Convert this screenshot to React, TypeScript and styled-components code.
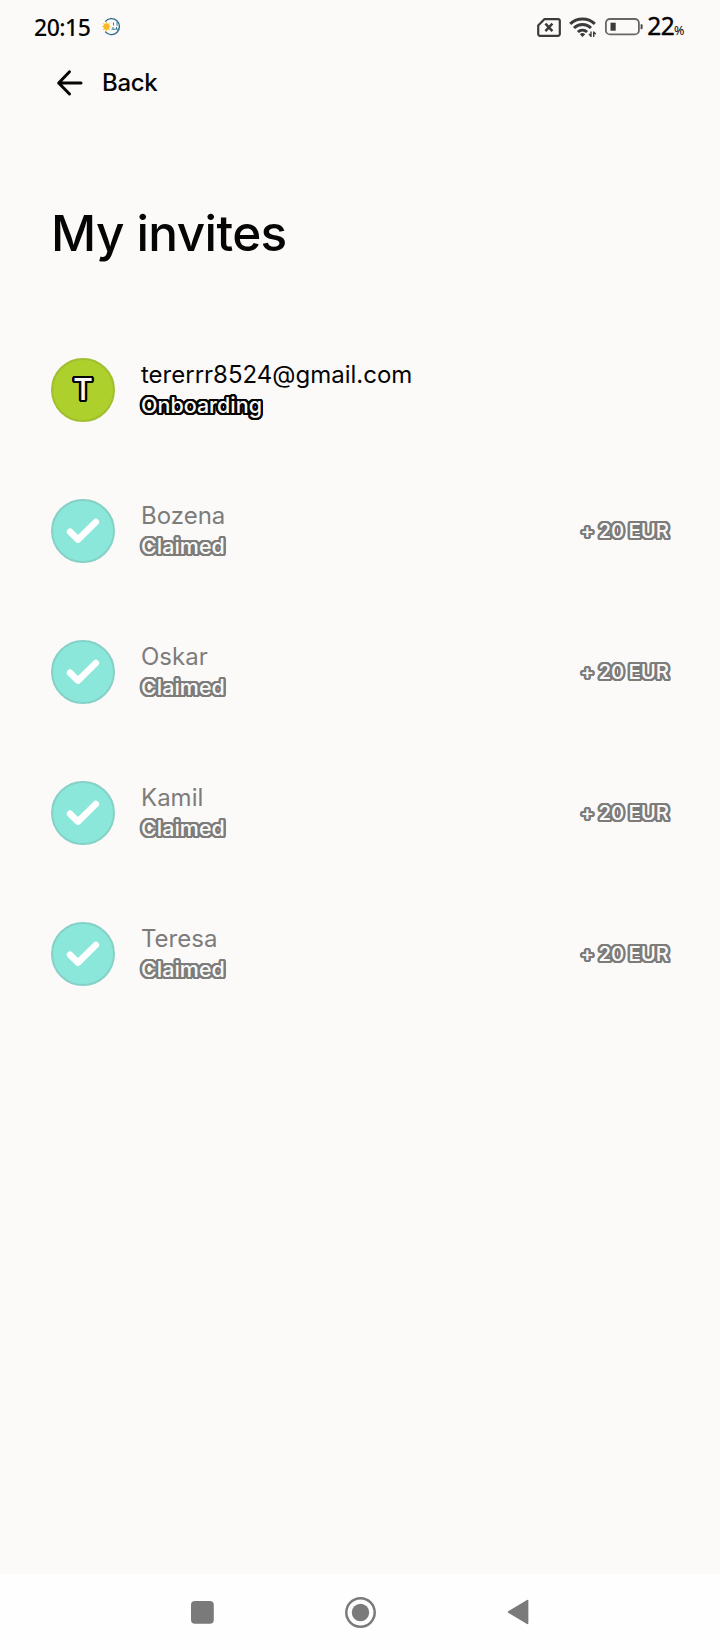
import React from 'react';
import styled, { createGlobalStyle } from 'styled-components';

const Global = createGlobalStyle`
  * { box-sizing: border-box; }
  body { margin: 0; background: #fcfaf9; font-family: Inter, "Liberation Sans", sans-serif; color: #050505; }
`;

const Screen = styled.div`
  width: 720px;
  height: 1650px;
  display: flex;
  flex-direction: column;
  background: #fcfaf9;
  overflow: hidden;
`;

const StatusBar = styled.header`
  height: 54px;
  padding: 0 36px 0 34px;
  display: flex;
  align-items: center;
  justify-content: space-between;
`;

const StatusGroup = styled.div`
  display: flex;
  align-items: center;
`;

const Clock = styled.span`
  font: 500 23px/28px "Noto Sans", sans-serif;
  letter-spacing: -0.5px;
  margin: -1px 12px 0 0;
`;

const BatteryLevel = styled.span`
  display: flex;
  align-items: baseline;
  margin: 2px 0 0 4px;
  font: 400 24.5px/28px "Noto Sans", sans-serif;
  -webkit-text-stroke: 0.4px #050505;
  letter-spacing: -0.6px;
`;

const Percent = styled.small`
  font-size: 12.5px;
  -webkit-text-stroke: 0;
  letter-spacing: -0.5px;
`;

const StatusIcon = styled.svg<{ $gap?: number }>`
  display: block;
  flex: none;
  margin-right: ${(p) => p.$gap ?? 0}px;
`;

const BackLink = styled.div`
  height: 56px;
  padding-left: 56px;
  display: flex;
  align-items: center;
  font-size: 24px;
  font-weight: 450;
  letter-spacing: -0.3px;
  svg { margin: 1px 18px 0 0; }
`;

const Title = styled.h1`
  margin: 91px 0 0 51px;
  font-size: 49.5px;
  line-height: 64px;
  font-weight: 450;
  letter-spacing: -0.6px;
`;

const InviteList = styled.ul`
  list-style: none;
  margin: 93px 0 0;
  padding: 0 51px;
  flex: 1;
`;

const InviteRow = styled.li<{ $claimed: boolean }>`
  height: 64px;
  margin-bottom: 77px;
  display: flex;
  align-items: center;
  color: ${(p) => (p.$claimed ? '#7c7c7b' : '#050505')};
`;

const Avatar = styled.div<{ $claimed: boolean }>`
  width: 64px;
  height: 64px;
  border-radius: 50%;
  background: ${(p) => (p.$claimed ? '#8be7da' : '#aed02c')};
  border: 2px solid ${(p) => (p.$claimed ? '#86d1c6' : '#a0bf2e')};
  display: flex;
  align-items: center;
  justify-content: center;
`;

// A ring of hard shadows gives the letters an outline with rounded corners.
const ring = (radius: number, color: string) =>
  Array.from({ length: 24 }, (_, i) => {
    const angle = (i * Math.PI) / 12;
    return `${(radius * Math.cos(angle)).toFixed(2)}px ${(radius * Math.sin(angle)).toFixed(2)}px 0 ${color}`;
  }).join(', ');

const Outlined = styled.span<{ $claimed: boolean }>`
  color: #fcfaf9;
  font-weight: 500;
  text-shadow: ${(p) => ring(2.2, p.$claimed ? '#7c7c7b' : '#050505')};
`;

const Initial = styled(Outlined)`
  font-size: 30px;
  line-height: 36px;
  margin-top: -2px;
`;

const Details = styled.div`
  margin: -2px 0 0 26px;
  flex: 1;
  display: flex;
  flex-direction: column;
`;

const Name = styled.span`
  font-size: 24px;
  line-height: 32px;
`;

const Status = styled(Outlined)`
  margin-top: -1px;
  font-size: 21.5px;
  line-height: 30px;
`;

const Amount = styled(Outlined)`
  font-size: 20.5px;
  line-height: 30px;
  letter-spacing: -0.1px;
  word-spacing: -1px;
`;

const NavBar = styled.nav`
  height: 76px;
  padding: 0 191px;
  display: flex;
  align-items: center;
  justify-content: space-between;
  background: #fefefe;
  svg { display: block; }
`;

interface Invite {
  name: string;
  status: string;
  reward?: string;
}

const invites: Invite[] = [
  { name: 'tererrr8524@gmail.com', status: 'Onboarding' },
  { name: 'Bozena', status: 'Claimed', reward: '+ 20 EUR' },
  { name: 'Oskar', status: 'Claimed', reward: '+ 20 EUR' },
  { name: 'Kamil', status: 'Claimed', reward: '+ 20 EUR' },
  { name: 'Teresa', status: 'Claimed', reward: '+ 20 EUR' },
];

const WeatherIcon = () => (
  <StatusIcon width="19" height="20" viewBox="0 0 19 20" fill="none">
    <path d="M3.2 4.6A8 8 0 1 1 3.2 14.6" stroke="#286b88" strokeWidth="1.4" />
    <path d="M4.5 4.5l1 2.4 2.4-1-1 2.4 2.1 1.3-2.1 1.2 1 2.5-2.4-1-1 2.4-1-2.4-2.5 1 1-2.5L0 9.6l2-1.3-1-2.4 2.5 1z" fill="#f8b92c" />
    <path d="M11.5 5.5v3M15 5v3.8M9.5 12.2h7M11 10v2M14.5 10v2.2" stroke="#3c8299" strokeWidth="1" />
  </StatusIcon>
);

const NoSimIcon = () => (
  <StatusIcon $gap={8} width="24" height="19" viewBox="0 0 24 19" fill="none" stroke="#3b3b3b">
    <path d="M7.3 1.2H21a1.8 1.8 0 0 1 1.8 1.8v13a1.8 1.8 0 0 1-1.8 1.8H3A1.8 1.8 0 0 1 1.2 16V7.6z" strokeWidth="2.2" strokeLinejoin="round" />
    <path d="M8.4 5.7l7 7.4M15.4 5.7l-7 7.4" strokeWidth="2.5" />
  </StatusIcon>
);

const WifiIcon = () => (
  <StatusIcon $gap={8} width="28" height="21" viewBox="0 0 28 21" fill="none" stroke="#3b3b3b">
    <path d="M1.2 6.8a18 18 0 0 1 24.6 0M5 11a12.3 12.3 0 0 1 17 0M8.9 15a6.8 6.8 0 0 1 9.2 0" strokeWidth="3" />
    <path d="M10.8 17.2a4 4 0 0 1 5.4 0l-2.7 2.9z" fill="#3b3b3b" stroke="none" />
    <path d="M22 14.5V20M20 17L22 19.2M24.7 20V14.5M26.7 17.2L24.7 15" strokeWidth="1.4" />
  </StatusIcon>
);

const BatteryIcon = () => (
  <StatusIcon width="38" height="18" viewBox="0 0 38 18">
    <rect x="0.9" y="1" width="33" height="15.4" rx="4" fill="none" stroke="#666" strokeWidth="1.8" />
    <rect x="5.5" y="4.7" width="5.2" height="8" fill="#3b3b3b" />
    <path d="M35.6 6.3h1a1 1 0 0 1 1 1v3a1 1 0 0 1-1 1h-1z" fill="#4b4b4b" />
  </StatusIcon>
);

const BackArrow = () => (
  <svg width="28" height="28" viewBox="0 0 28 28" fill="none" stroke="#050505" strokeWidth="3" strokeLinecap="round" strokeLinejoin="round">
    <path d="M25 14H2.7M13.5 2.8L2.7 14l10.8 11" />
  </svg>
);

const CheckIcon = () => (
  <svg width="36" height="30" viewBox="-18 -15 36 30" fill="none" stroke="#fff" strokeWidth="6.6" strokeLinecap="round" strokeLinejoin="round">
    <path d="M-12.9.8L-5 8.6 12.8-9" />
  </svg>
);

export default function App() {
  return (
    <>
      <Global />
      <Screen>
        <StatusBar>
          <StatusGroup>
            <Clock>20:15</Clock>
            <WeatherIcon />
          </StatusGroup>
          <StatusGroup>
            <NoSimIcon />
            <WifiIcon />
            <BatteryIcon />
            <BatteryLevel>22<Percent>%</Percent></BatteryLevel>
          </StatusGroup>
        </StatusBar>
        <BackLink>
          <BackArrow />
          Back
        </BackLink>
        <Title>My invites</Title>
        <InviteList>
          {invites.map((invite) => {
            const claimed = invite.reward !== undefined;
            return (
              <InviteRow key={invite.name} $claimed={claimed}>
                <Avatar $claimed={claimed}>
                  {claimed ? <CheckIcon /> : <Initial $claimed={false}>T</Initial>}
                </Avatar>
                <Details>
                  <Name>{invite.name}</Name>
                  <Status $claimed={claimed}>{invite.status}</Status>
                </Details>
                {claimed && <Amount $claimed>{invite.reward}</Amount>}
              </InviteRow>
            );
          })}
        </InviteList>
        <NavBar>
          <svg width="23" height="23" viewBox="0 0 23 23"><rect width="22.8" height="22.8" rx="4" fill="#7a7a7a" /></svg>
          <svg width="31" height="31" viewBox="0 0 31 31">
            <circle cx="15.5" cy="15.5" r="14.2" fill="none" stroke="#7a7a7a" strokeWidth="2.5" />
            <circle cx="15.5" cy="15.5" r="8.7" fill="#7a7a7a" />
          </svg>
          <svg width="22" height="26" viewBox="0 0 22 26"><path d="M20 1L1.2 12.2a1 1 0 0 0 0 1.6L20 25q1.4.6 1.4-1V2q0-1.6-1.4-1z" fill="#7a7a7a" /></svg>
        </NavBar>
      </Screen>
    </>
  );
}
